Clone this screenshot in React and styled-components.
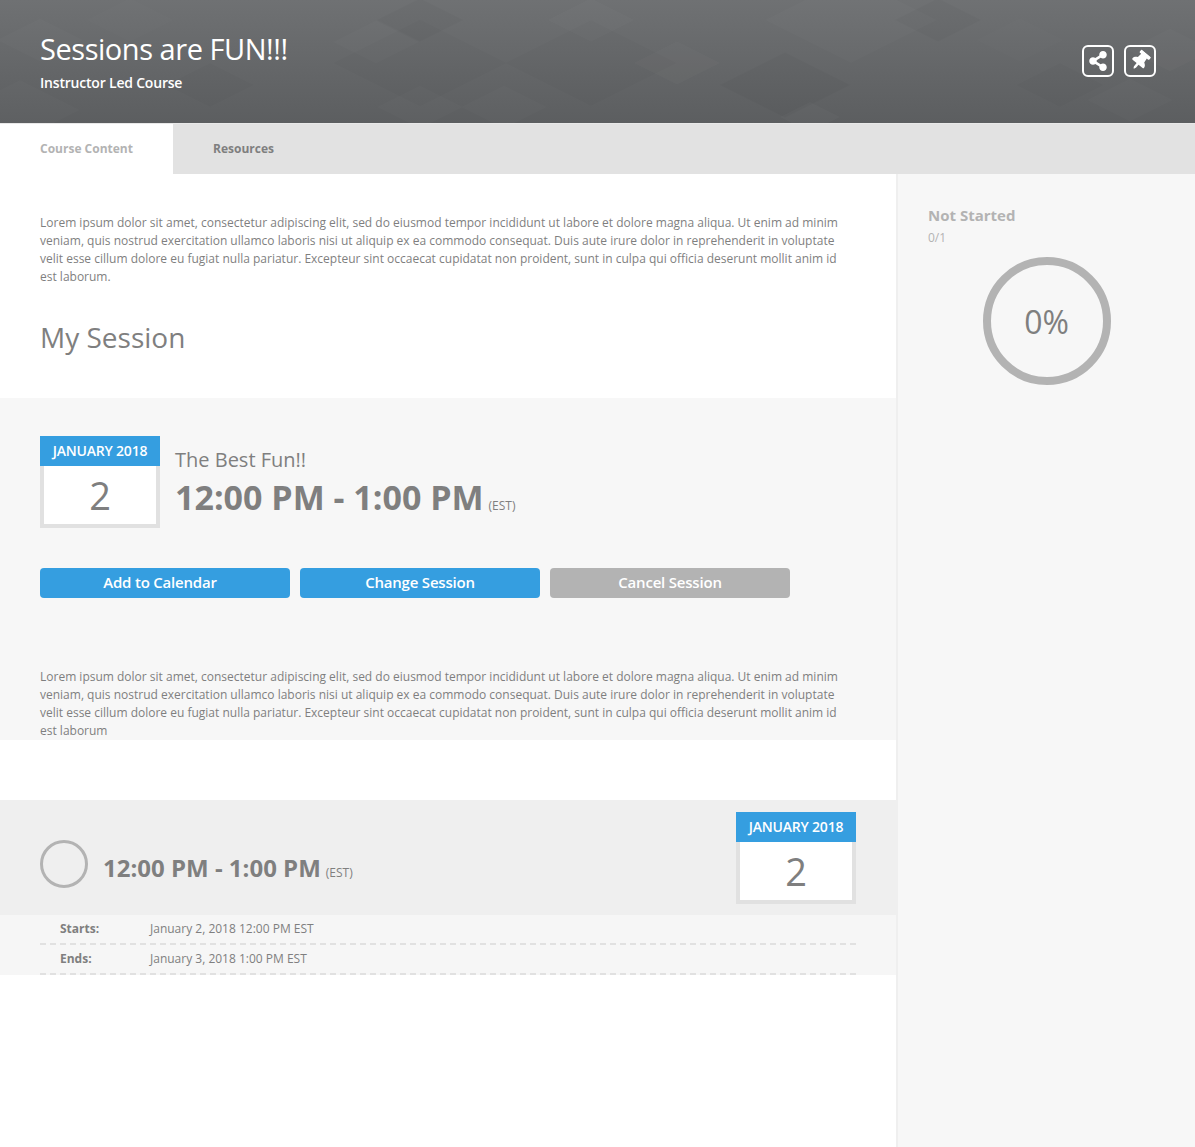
import React from 'react'
import styled, { createGlobalStyle } from 'styled-components'
import { FaShareAlt, FaThumbtack } from 'react-icons/fa'

const LOREM =
  'Lorem ipsum dolor sit amet, consectetur adipiscing elit, sed do eiusmod tempor incididunt ut labore et dolore magna aliqua. Ut enim ad minim veniam, quis nostrud exercitation ullamco laboris nisi ut aliquip ex ea commodo consequat. Duis aute irure dolor in reprehenderit in voluptate velit esse cillum dolore eu fugiat nulla pariatur. Excepteur sint occaecat cupidatat non proident, sunt in culpa qui officia deserunt mollit anim id est laborum'

const GlobalStyle = createGlobalStyle`
  html, body {
    margin: 0;
    padding: 0;
    background: #fff;
  }
  body {
    font-family: 'Open Sans', 'Liberation Sans', sans-serif;
    color: #7f7f7f;
  }
  * {
    box-sizing: border-box;
  }
`

const Page = styled.div`
  width: 1195px;
  height: 1147px;
  display: flex;
  flex-direction: column;
  overflow: hidden;
`

const Header = styled.header`
  position: relative;
  height: 123px;
  flex: none;
  padding: 32px 39px 0 40px;
  display: flex;
  justify-content: space-between;
  background: linear-gradient(#6f7173, #5c5e60);
  color: #fff;
  overflow: hidden;
`

const HeaderPattern = styled.svg`
  position: absolute;
  left: 0;
  top: 0;
`

const HeaderText = styled.div`
  position: relative;
`

const Title = styled.h1`
  margin: 0;
  font-size: 29px;
  line-height: 34px;
  font-weight: 400;
  letter-spacing: -0.46px;
`

const Subtitle = styled.div`
  margin-top: 8px;
  font-size: 14px;
  line-height: 18px;
  font-weight: 600;
  letter-spacing: -0.2px;
`

const HeaderActions = styled.div`
  position: relative;
  display: flex;
  gap: 10px;
  margin-top: 13px;
`

const IconButton = styled.button`
  width: 32px;
  height: 32px;
  padding: 0;
  display: flex;
  align-items: center;
  justify-content: center;
  border: 2px solid #fff;
  border-radius: 6px;
  background: transparent;
  color: #fff;
  font-size: 20px;
`

const PinIcon = styled(FaThumbtack)`
  transform: rotate(40deg);
`

const Tabs = styled.nav`
  height: 51px;
  flex: none;
  display: flex;
  background: #e2e2e2;
  border-top: 1px solid #e8e8e8;
`

const Tab = styled.div`
  width: ${(p) => (p.$active ? '173px' : 'auto')};
  padding: 0 40px 2px;
  display: flex;
  align-items: center;
  font-size: 12px;
  font-weight: 700;
  color: ${(p) => (p.$active ? '#b3b3b3' : '#7f7f7f')};
  background: ${(p) => (p.$active ? '#fff' : 'transparent')};
`

const Body = styled.div`
  flex: 1;
  display: flex;
  min-height: 0;
`

const Main = styled.main`
  width: 896px;
  flex: none;
`

const Intro = styled.section`
  height: 224px;
  padding: 40px 56px 0 40px;
`

const Paragraph = styled.p`
  margin: 0;
  font-size: 12px;
  line-height: 18px;
  color: #7f7f7f;
`

const SectionTitle = styled.h2`
  margin: 32px 0 0;
  font-size: 28px;
  line-height: 38px;
  font-weight: 400;
`

const SessionPanel = styled.section`
  height: 342px;
  padding: 38px 56px 0 40px;
  background: #f7f7f7;
`

const SessionTop = styled.div`
  display: flex;
  align-items: flex-start;
  gap: 15px;
`

const CalendarBox = styled.div`
  width: 120px;
  flex: none;
`

const CalendarMonth = styled.div`
  height: 30px;
  padding-bottom: 2px;
  display: flex;
  align-items: center;
  justify-content: center;
  background: #359ee0;
  color: #fff;
  font-size: 14px;
  font-weight: 600;
  letter-spacing: -0.2px;
`

const CalendarDay = styled.div`
  height: 62px;
  display: flex;
  align-items: center;
  justify-content: center;
  background: #fff;
  border: 4px solid #e1e1e1;
  border-top: 0;
  font-size: 38px;
  color: #7f7f7f;
`

const SessionInfo = styled.div`
  padding-top: 10px;
`

const SessionName = styled.div`
  font-size: 20px;
  line-height: 28px;
`

const TimeLine = styled.div`
  display: flex;
  align-items: baseline;
  margin-top: ${(p) => (p.$small ? '8px' : '0')};
  font-size: ${(p) => (p.$small ? '24px' : '34px')};
  line-height: ${(p) => (p.$small ? '34px' : '46px')};
  font-weight: 700;
`

const Zone = styled.span`
  margin-left: 5px;
  font-size: 12px;
  line-height: 1;
  font-weight: 400;
`

const Buttons = styled.div`
  display: flex;
  gap: 10px;
  margin-top: 40px;
`

const ActionButton = styled.button`
  width: ${(p) => (p.$wide ? '250px' : '240px')};
  height: 30px;
  padding: 0 ${(p) => (p.$wide ? '10px' : '0')} 2px 0;
  border: 0;
  border-radius: 4px;
  background: ${(p) => (p.$muted ? '#b3b3b3' : '#359ee0')};
  color: #fff;
  font-family: inherit;
  font-size: 15px;
  font-weight: 600;
  letter-spacing: -0.2px;
`

const PanelText = styled.div`
  margin-top: 70px;
`

const Spacer = styled.div`
  height: 60px;
`

const RowHead = styled.div`
  height: 115px;
  padding: 12px 40px 0;
  display: flex;
  justify-content: space-between;
  background: #efefef;
`

const RowLeft = styled.div`
  display: flex;
  align-items: center;
  gap: 15px;
  height: 104px;
`

const StatusCircle = styled.div`
  width: 48px;
  height: 48px;
  border: 3px solid #b3b3b3;
  border-radius: 50%;
`

const Details = styled.div`
  padding: 0 40px;
  background: #f6f6f6;
`

const DetailRow = styled.div`
  height: 30px;
  padding: 0 0 2px 20px;
  display: flex;
  align-items: center;
  border-bottom: 2px dashed #e1e1e1;
  font-size: 12px;
`

const DetailLabel = styled.span`
  width: 90px;
  font-weight: 700;
`

const Sidebar = styled.aside`
  flex: 1;
  padding: 30px 30px 0;
  background: #f7f7f7;
  border-left: 2px solid #efefef;
`

const StatusTitle = styled.div`
  font-size: 15px;
  line-height: 22px;
  font-weight: 700;
  color: #b3b3b3;
`

const StatusCount = styled.div`
  margin-top: 3px;
  font-size: 12px;
  line-height: 18px;
  color: #b3b3b3;
`

const Progress = styled.div`
  width: 128px;
  height: 128px;
  margin: 10px auto 0;
  display: flex;
  align-items: center;
  justify-content: center;
  border: 8px solid #b3b3b3;
  border-radius: 50%;
  font-size: 32px;
`

// x, y, half width, opacity (negative is a dark diamond)
const diamonds = [
  [591, 20, 43, 0.02], [420, 20, 43, -0.018], [677, 63, 43, 0.02], [938, 20, 43, -0.02],
  [420, 63, 86, -0.015], [591, 63, 86, -0.012], [504, 107, 43, 0.015], [420, 107, 43, 0.015],
  [785, 85, 65, -0.022], [810, 117, 30, 0.02], [851, 20, 86, 0.014], [376, 42, 43, 0.014],
  [40, 40, 43, 0.014], [130, 20, 43, 0.01], [20, 110, 60, 0.014], [210, 85, 43, -0.014],
  [1170, 50, 43, 0.018], [1060, 85, 43, -0.014], [1130, 100, 43, 0.014], [1020, 40, 43, 0.01],
]

const Calendar = () => (
  <CalendarBox>
    <CalendarMonth>JANUARY 2018</CalendarMonth>
    <CalendarDay>2</CalendarDay>
  </CalendarBox>
)

export default function App() {
  return (
    <Page>
      <GlobalStyle />
      <Header>
        <HeaderPattern width="1195" height="123" aria-hidden="true">
          {diamonds.map(([x, y, w, o]) => (
            <polygon
              key={`${x}-${y}-${w}`}
              points={`${x - w},${y} ${x},${y - w / 2} ${x + w},${y} ${x},${y + w / 2}`}
              fill={o > 0 ? '#fff' : '#000'}
              fillOpacity={Math.abs(o)}
            />
          ))}
        </HeaderPattern>
        <HeaderText>
          <Title>Sessions are FUN!!!</Title>
          <Subtitle>Instructor Led Course</Subtitle>
        </HeaderText>
        <HeaderActions>
          <IconButton><FaShareAlt /></IconButton>
          <IconButton><PinIcon /></IconButton>
        </HeaderActions>
      </Header>
      <Tabs>
        <Tab $active>Course Content</Tab>
        <Tab>Resources</Tab>
      </Tabs>
      <Body>
        <Main>
          <Intro>
            <Paragraph>{`${LOREM}.`}</Paragraph>
            <SectionTitle>My Session</SectionTitle>
          </Intro>
          <SessionPanel>
            <SessionTop>
              <Calendar />
              <SessionInfo>
                <SessionName>The Best Fun!!</SessionName>
                <TimeLine>12:00 PM - 1:00 PM<Zone>(EST)</Zone></TimeLine>
              </SessionInfo>
            </SessionTop>
            <Buttons>
              <ActionButton $wide>Add to Calendar</ActionButton>
              <ActionButton>Change Session</ActionButton>
              <ActionButton $muted>Cancel Session</ActionButton>
            </Buttons>
            <PanelText>
              <Paragraph>{LOREM}</Paragraph>
            </PanelText>
          </SessionPanel>
          <Spacer />
          <RowHead>
            <RowLeft>
              <StatusCircle />
              <TimeLine $small>12:00 PM - 1:00 PM<Zone>(EST)</Zone></TimeLine>
            </RowLeft>
            <Calendar />
          </RowHead>
          <Details>
            <DetailRow><DetailLabel>Starts:</DetailLabel>January 2, 2018 12:00 PM EST</DetailRow>
            <DetailRow><DetailLabel>Ends:</DetailLabel>January 3, 2018 1:00 PM EST</DetailRow>
          </Details>
        </Main>
        <Sidebar>
          <StatusTitle>Not Started</StatusTitle>
          <StatusCount>0/1</StatusCount>
          <Progress>0%</Progress>
        </Sidebar>
      </Body>
    </Page>
  )
}
